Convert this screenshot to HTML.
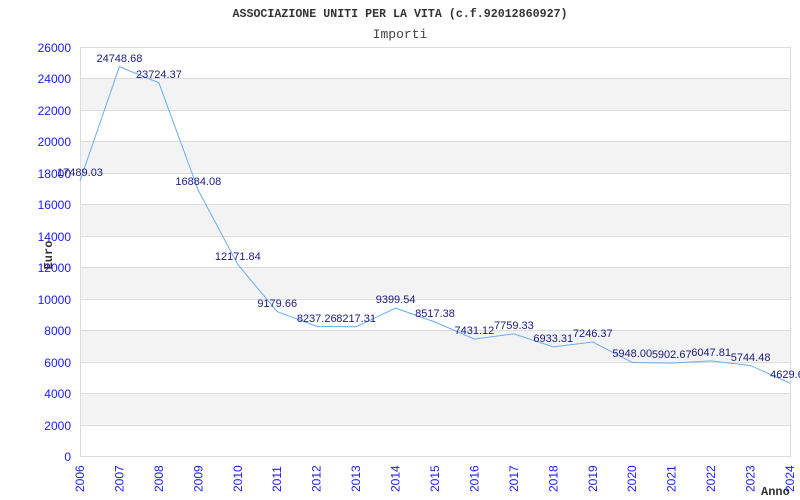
<!DOCTYPE html>
<html><head><meta charset="utf-8"><style>html,body{margin:0;padding:0;background:#fff;}svg{display:block}</style></head><body>
<svg width="800" height="500" xmlns="http://www.w3.org/2000/svg" font-family="Liberation Sans, sans-serif">
<rect width="800" height="500" fill="#fff"/>
<g fill="#f3f3f3">
<rect x="80" y="78.5" width="710" height="31.5"/>
<rect x="80" y="141.4" width="710" height="31.5"/>
<rect x="80" y="204.3" width="710" height="31.5"/>
<rect x="80" y="267.2" width="710" height="31.5"/>
<rect x="80" y="330.2" width="710" height="31.5"/>
<rect x="80" y="393.1" width="710" height="31.5"/>
</g>
<g stroke="#dcdcdc" stroke-width="1">
<line x1="80" x2="790" y1="47.5" y2="47.5"/><line x1="80" x2="790" y1="78.5" y2="78.5"/><line x1="80" x2="790" y1="110.5" y2="110.5"/><line x1="80" x2="790" y1="141.5" y2="141.5"/><line x1="80" x2="790" y1="173.5" y2="173.5"/><line x1="80" x2="790" y1="204.5" y2="204.5"/><line x1="80" x2="790" y1="236.5" y2="236.5"/><line x1="80" x2="790" y1="267.5" y2="267.5"/><line x1="80" x2="790" y1="299.5" y2="299.5"/><line x1="80" x2="790" y1="330.5" y2="330.5"/><line x1="80" x2="790" y1="362.5" y2="362.5"/><line x1="80" x2="790" y1="393.5" y2="393.5"/><line x1="80" x2="790" y1="425.5" y2="425.5"/><line x1="80" x2="790" y1="456.5" y2="456.5"/>
<line x1="80.5" x2="80.5" y1="47" y2="457"/><line x1="790.5" x2="790.5" y1="47" y2="457"/>
</g>
<text x="400" y="17" text-anchor="middle" font-family="Liberation Mono, monospace" font-weight="bold" font-size="12" fill="#333" textLength="335" lengthAdjust="spacingAndGlyphs">ASSOCIAZIONE UNITI PER LA VITA (c.f.92012860927)</text>
<text x="400" y="38" text-anchor="middle" font-family="Liberation Mono, monospace" font-size="13" fill="#444">Importi</text>
<g fill="#1a1aff" font-size="12" text-anchor="end">
<text x="71" y="52">26000</text><text x="71" y="83">24000</text><text x="71" y="115">22000</text><text x="71" y="146">20000</text><text x="71" y="178">18000</text><text x="71" y="209">16000</text><text x="71" y="241">14000</text><text x="71" y="272">12000</text><text x="71" y="304">10000</text><text x="71" y="335">8000</text><text x="71" y="367">6000</text><text x="71" y="398">4000</text><text x="71" y="430">2000</text><text x="71" y="461">0</text>
</g>
<text transform="translate(52,255) rotate(-90)" text-anchor="middle" font-family="Liberation Mono, monospace" font-weight="bold" font-size="12" fill="#333">Euro</text>
<text x="761" y="495" font-family="Liberation Mono, monospace" font-weight="bold" font-size="12" fill="#333">Anno</text>
<g fill="#1a1aff" font-size="12" text-anchor="start">
<text transform="translate(84,492) rotate(-90)">2006</text><text transform="translate(123.4,492) rotate(-90)">2007</text><text transform="translate(162.9,492) rotate(-90)">2008</text><text transform="translate(202.3,492) rotate(-90)">2009</text><text transform="translate(241.8,492) rotate(-90)">2010</text><text transform="translate(281.2,492) rotate(-90)">2011</text><text transform="translate(320.7,492) rotate(-90)">2012</text><text transform="translate(360.1,492) rotate(-90)">2013</text><text transform="translate(399.6,492) rotate(-90)">2014</text><text transform="translate(439,492) rotate(-90)">2015</text><text transform="translate(478.4,492) rotate(-90)">2016</text><text transform="translate(517.9,492) rotate(-90)">2017</text><text transform="translate(557.3,492) rotate(-90)">2018</text><text transform="translate(596.8,492) rotate(-90)">2019</text><text transform="translate(636.2,492) rotate(-90)">2020</text><text transform="translate(675.7,492) rotate(-90)">2021</text><text transform="translate(715.1,492) rotate(-90)">2022</text><text transform="translate(754.6,492) rotate(-90)">2023</text><text transform="translate(794,492) rotate(-90)">2024</text>
</g>
<polyline fill="none" stroke="#6aaef0" stroke-width="1" points="80,180.9 119.4,66.7 158.9,82.8 198.3,190.4 237.8,264.5 277.2,311.6 316.7,326.4 356.1,326.7 395.6,308.1 435,322 474.4,339.1 513.9,333.9 553.3,346.9 592.8,342 632.2,362.4 671.7,363.1 711.1,360.9 750.6,365.6 790,383.2"/>
<g fill="#1a1a80" font-size="11" text-anchor="middle">
<text x="80" y="176">17489.03</text><text x="119.4" y="62">24748.68</text><text x="158.9" y="78">23724.37</text><text x="198.3" y="185">16884.08</text><text x="237.8" y="260">12171.84</text><text x="277.2" y="307">9179.66</text><text x="316.7" y="322">8237.26</text><text x="356.1" y="322">8217.31</text><text x="395.6" y="303">9399.54</text><text x="435" y="317">8517.38</text><text x="474.4" y="334">7431.12</text><text x="513.9" y="329">7759.33</text><text x="553.3" y="342">6933.31</text><text x="592.8" y="337">7246.37</text><text x="632.2" y="357">5948.00</text><text x="671.7" y="358">5902.67</text><text x="711.1" y="356">6047.81</text><text x="750.6" y="361">5744.48</text><text x="790" y="378">4629.60</text>
</g>
</svg>
</body></html>
